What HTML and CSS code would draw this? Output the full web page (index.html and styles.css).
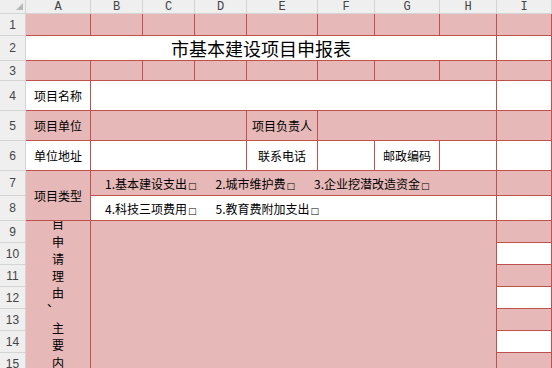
FILE: index.html
```html
<!DOCTYPE html>
<html lang="zh-CN">
<head>
  <meta charset="UTF-8" />
  <title>市基本建设项目申报表</title>
  <link rel="stylesheet" href="styles.css">
</head>
<body>
  <div class="sheet">
    <!-- column headers -->
    <div class="hd corner">
      <svg width="10" height="9" viewBox="0 0 10 9"><polygon points="9,1 9,8 2,8" fill="#b8b8b8"/></svg>
    </div>
    <div class="hd col">A</div>
    <div class="hd col">B</div>
    <div class="hd col">C</div>
    <div class="hd col">D</div>
    <div class="hd col">E</div>
    <div class="hd col">F</div>
    <div class="hd col">G</div>
    <div class="hd col">H</div>
    <div class="hd col">I</div>

    <!-- row 1 -->
    <div class="hd num">1</div>
    <div class="c pink"></div>
    <div class="c pink"></div>
    <div class="c pink"></div>
    <div class="c pink"></div>
    <div class="c pink"></div>
    <div class="c pink"></div>
    <div class="c pink"></div>
    <div class="c pink"></div>
    <div class="c pink"></div>

    <!-- row 2 -->
    <div class="hd num">2</div>
    <div class="c s8 title">市基本建设项目申报表</div>
    <div class="c"></div>

    <!-- row 3 -->
    <div class="hd num">3</div>
    <div class="c pink"></div>
    <div class="c pink"></div>
    <div class="c pink"></div>
    <div class="c pink"></div>
    <div class="c pink"></div>
    <div class="c pink"></div>
    <div class="c pink"></div>
    <div class="c pink"></div>
    <div class="c pink"></div>

    <!-- row 4 -->
    <div class="hd num">4</div>
    <div class="c">项目名称</div>
    <div class="c s7"></div>
    <div class="c"></div>

    <!-- row 5 -->
    <div class="hd num">5</div>
    <div class="c pink">项目单位</div>
    <div class="c pink s3"></div>
    <div class="c pink">项目负责人</div>
    <div class="c pink s3"></div>
    <div class="c pink"></div>

    <!-- row 6 -->
    <div class="hd num">6</div>
    <div class="c">单位地址</div>
    <div class="c s3"></div>
    <div class="c">联系电话</div>
    <div class="c"></div>
    <div class="c">邮政编码</div>
    <div class="c"></div>
    <div class="c"></div>

    <!-- rows 7-8 -->
    <div class="hd num">7</div>
    <div class="c pink v2">项目类型</div>
    <div class="c pink s7 opts">
      <span>1.基本建设支出<span class="chk">□</span></span>
      <span>2.城市维护费<span class="chk">□</span></span>
      <span>3.企业挖潜改造资金<span class="chk">□</span></span>
    </div>
    <div class="c pink"></div>

    <div class="hd num">8</div>
    <div class="c s7 opts">
      <span>4.科技三项费用<span class="chk">□</span></span>
      <span>5.教育费附加支出<span class="chk">□</span></span>
    </div>
    <div class="c"></div>

    <!-- rows 9-15 -->
    <div class="hd num">9</div>
    <div class="c pink v7 tall"><div class="vt">项目申请理由<span class="dun">、</span>主要内容</div></div>
    <div class="c pink s7 v7"></div>
    <div class="c pink"></div>

    <div class="hd num">10</div>
    <div class="c"></div>
    <div class="hd num">11</div>
    <div class="c pink"></div>
    <div class="hd num">12</div>
    <div class="c"></div>
    <div class="hd num">13</div>
    <div class="c pink"></div>
    <div class="hd num">14</div>
    <div class="c"></div>
    <div class="hd num">15</div>
    <div class="c pink"></div>
  </div>
</body>
</html>
```

FILE: styles.css
```css
body {
  margin: 0;
  background: #fff;
  overflow: hidden;
}
.sheet {
  display: grid;
  grid-template-columns: 26px 65px 52px 52px 52px 71px 57px 65px 57px 55px;
  grid-template-rows: 14px 22px 25px 20px 30px 30px 30px 25px 25px repeat(7, 22px);
  width: 552px;
  font-family: "Noto Sans CJK SC", sans-serif;
  font-size: 12px;
  color: #000;
}
.hd {
  background: #efefef;
  border-right: 1px solid #d4d4d4;
  border-bottom: 1px solid #d4d4d4;
  color: #444;
  display: flex;
  align-items: center;
  justify-content: center;
}
.corner {
  justify-content: flex-end;
  align-items: flex-start;
  padding: 2px 1px 0 0;
}
.col {
  font-family: "Liberation Mono", monospace;
  font-size: 12px;
}
.num {
  font-family: "Liberation Sans", sans-serif;
  font-size: 12px;
}
.c {
  background: #fff;
  border-right: 1px solid #c0504d;
  border-bottom: 1px solid #c0504d;
  display: flex;
  align-items: center;
  justify-content: center;
  white-space: nowrap;
  overflow: hidden;
}
.pink {
  background: #e6b8b7;
}
.s3 { grid-column: span 3; }
.s7 { grid-column: span 7; }
.s8 { grid-column: span 8; }
.v2 { grid-row: span 2; }
.v7 { grid-row: span 7; }
.title {
  font-size: 18px;
}
.opts {
  justify-content: flex-start;
  padding-left: 14px;
  gap: 19px;
}
.chk {
  font-family: "DejaVu Sans", sans-serif;
  font-size: 9px;
  margin-left: 1px;
}
.tall {
  align-items: flex-start;
}
.vt {
  width: 12px;
  margin-top: -23px;
  line-height: 17.3px;
  text-align: left;
  white-space: normal;
  word-break: break-all;
  line-break: anywhere;
}
.dun {
  display: inline-block;
  width: 12px;
  transform: translate(-5px, -9px);
}
```
